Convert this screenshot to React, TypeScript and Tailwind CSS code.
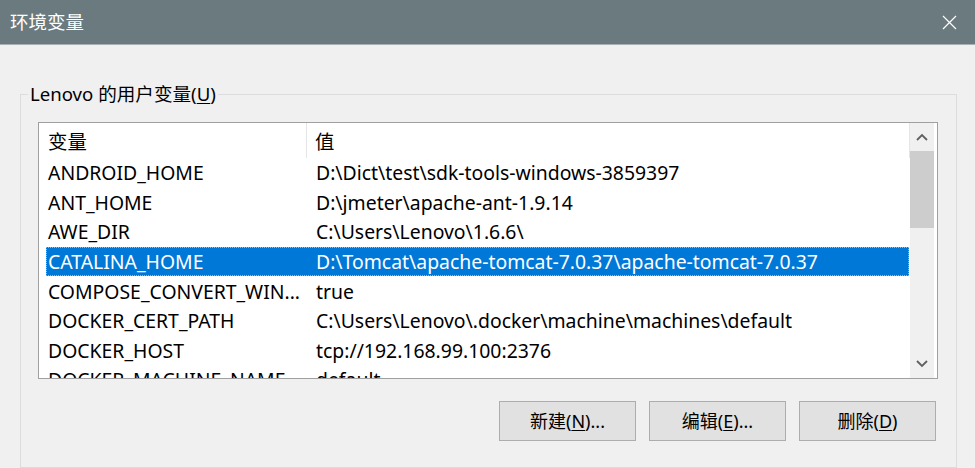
import React from "react";

const rows: [string, string][] = [
	["ANDROID_HOME", "D:\\Dict\\test\\sdk-tools-windows-3859397"],
	["ANT_HOME", "D:\\jmeter\\apache-ant-1.9.14"],
	["AWE_DIR", "C:\\Users\\Lenovo\\1.6.6\\"],
	["CATALINA_HOME", "D:\\Tomcat\\apache-tomcat-7.0.37\\apache-tomcat-7.0.37"],
	["COMPOSE_CONVERT_WIN...", "true"],
	["DOCKER_CERT_PATH", "C:\\Users\\Lenovo\\.docker\\machine\\machines\\default"],
	["DOCKER_HOST", "tcp://192.168.99.100:2376"],
	["DOCKER_MACHINE_NAME", "default"],
];

const selected = 3;

function Chevron({ up }: { up?: boolean }) {
	return (
		<svg width="12" height="8" viewBox="0 0 12 8" fill="none">
			<path
				d={up ? "M1 7 L6 2 L11 7" : "M1 1 L6 6 L11 1"}
				stroke="#606060"
				strokeWidth="1.8"
			/>
		</svg>
	);
}

function WinButton({ label, mnemonic, tail }: { label: string; mnemonic: string; tail: string }) {
	return (
		<button
			type="button"
			className="w-[137px] h-[40px] bg-[#e1e1e1] border border-[#adadad] text-[18px] text-black flex items-center justify-center"
		>
			{label}(<span className="underline underline-offset-2">{mnemonic}</span>){tail}
		</button>
	);
}

export default function App() {
	return (
		<div className="w-[975px] h-[468px] bg-[#f0f0f0] overflow-hidden text-black font-['Noto_Sans','Noto_Sans_CJK_SC',sans-serif]">
			<div className="h-[45px] bg-[#6b7a7f] border-b border-[#a7b1b4] flex items-center justify-between pl-[10px] pr-[18px]">
				<span className="text-white text-[18.5px]">环境变量</span>
				<svg width="15" height="15" viewBox="0 0 15 15">
					<path d="M1 1 L14 14 M14 1 L1 14" stroke="#ffffff" strokeWidth="1.2" />
				</svg>
			</div>

			<fieldset className="ml-[20px] mt-[37px] w-[937px] h-[386px] border border-[#dcdcdc]">
				<legend className="ml-[7px] px-[2px] text-[18.6px] leading-[24px]">
					Lenovo 的用户变量(<span className="underline underline-offset-2">U</span>)
				</legend>

				<div className="ml-[17px] mt-[16px] w-[900px] h-[257px] border border-[#a0a0a0] bg-white flex overflow-hidden">
					<div className="flex-1 overflow-hidden text-[19.4px]">
						<div className="h-[35px] flex">
							<div className="w-[268px] border-r border-[#e5e5e5] pl-[9px] pt-[2px] flex items-center">变量</div>
							<div className="flex-1 border-r border-[#e5e5e5] pl-[8px] pt-[2px] flex items-center">值</div>
						</div>
						{rows.map(([name, value], i) => (
							<div
								key={name}
								className={
									i === selected
										? "ml-[7px] mr-[1px] h-[29.6px] flex items-center bg-[#0078d7] text-white outline outline-1 outline-dotted outline-[#f0a860] -outline-offset-1"
										: "ml-[7px] mr-[1px] h-[29.6px] flex items-center"
								}
							>
								<div className="w-[261px] pl-[2px] whitespace-nowrap overflow-hidden">{name}</div>
								<div className="flex-1 pl-[9px] whitespace-nowrap overflow-hidden">{value}</div>
							</div>
						))}
					</div>
					<div className="w-[24px] mr-[3px] bg-[#f0f0f0] flex flex-col">
						<div className="h-[28px] flex items-center justify-center">
							<Chevron up />
						</div>
						<div className="h-[77px] bg-[#cdcdcd]" />
						<div className="flex-1" />
						<div className="h-[28px] flex items-center justify-center">
							<Chevron />
						</div>
					</div>
				</div>

				<div className="mt-[22px] mr-[20px] flex justify-end gap-[13px]">
					<WinButton label="新建" mnemonic="N" tail="..." />
					<WinButton label="编辑" mnemonic="E" tail="..." />
					<WinButton label="删除" mnemonic="D" tail="" />
				</div>
			</fieldset>
		</div>
	);
}
